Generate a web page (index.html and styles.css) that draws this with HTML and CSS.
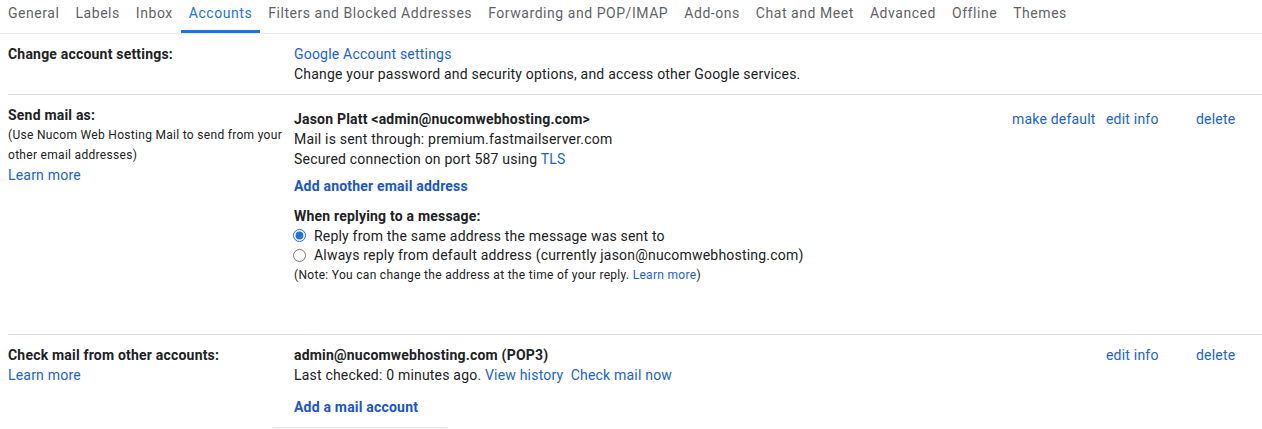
FILE: index.html
```html
<!DOCTYPE html>
<html>
<head>
<meta charset="utf-8">
<link rel="stylesheet" href="styles.css">
</head>
<body>
<div class="page">
  <nav class="tabs">
    <span class="tab">General</span>
    <span class="tab">Labels</span>
    <span class="tab">Inbox</span>
    <span class="tab active">Accounts</span>
    <span class="tab">Filters and Blocked Addresses</span>
    <span class="tab">Forwarding and POP/IMAP</span>
    <span class="tab">Add-ons</span>
    <span class="tab">Chat and Meet</span>
    <span class="tab">Advanced</span>
    <span class="tab">Offline</span>
    <span class="tab">Themes</span>
  </nav>

  <section class="row">
    <div class="label"><b>Change account settings:</b></div>
    <div class="content">
      <a class="link block">Google Account settings</a>
      <div>Change your password and security options, and access other Google services.</div>
    </div>
    <div class="act"></div><div class="act"></div><div class="act"></div>
  </section>

  <section class="row sendas">
    <div class="label">
      <b>Send mail as:</b>
      <div class="small">(Use Nucom Web Hosting Mail to send from your other email addresses)</div>
      <a class="link block">Learn more</a>
    </div>
    <div class="content shifted">
      <b>Jason Platt &lt;admin@nucomwebhosting.com&gt;</b>
      <div>Mail is sent through: premium.fastmailserver.com</div>
      <div>Secured connection on port 587 using <a class="link">TLS</a></div>
      <a class="blink add-email">Add another email address</a>
      <div class="reply-head"><b>When replying to a message:</b></div>
      <label class="radio-line"><input type="radio" name="r" checked> Reply from the same address the message was sent to</label>
      <label class="radio-line"><input type="radio" name="r"> Always reply from default address (currently jason@nucomwebhosting.com)</label>
      <div class="note">(Note: You can change the address at the time of your reply. <a class="link">Learn more</a>)</div>
    </div>
    <div class="act shifted"><a class="link">make default</a></div>
    <div class="act shifted"><a class="link">edit info</a></div>
    <div class="act shifted"><a class="link">delete</a></div>
  </section>

  <section class="row last">
    <div class="label">
      <b>Check mail from other accounts:</b>
      <a class="link block">Learn more</a>
    </div>
    <div class="content">
      <b>admin@nucomwebhosting.com (POP3)</b>
      <div>Last checked: 0 minutes ago. <a class="link">View history</a>&nbsp; <a class="link">Check mail now</a></div>
      <a class="blink add-account">Add a mail account</a>
      <div class="stub"></div>
    </div>
    <div class="act"></div>
    <div class="act"><a class="link">edit info</a></div>
    <div class="act"><a class="link">delete</a></div>
  </section>
</div>
</body>
</html>
```

FILE: styles.css
```css
html, body {
  margin: 0;
  padding: 0;
  background: #fff;
}
body {
  font-family: Roboto, "Liberation Sans", Arial, sans-serif;
  font-size: 14px;
  line-height: 20px;
  letter-spacing: 0.2px;
  color: #202124;
  overflow: hidden;
}
.page {
  margin-left: 8px;
}
.tabs {
  display: flex;
  height: 33px;
  border-bottom: 1px solid #e8eaed;
  margin-left: -8px;
}
.tab {
  display: block;
  padding: 3px 8px 0;
  box-sizing: border-box;
  height: 33px;
  color: #5f6368;
  font-size: 14px;
  letter-spacing: 0.55px;
  white-space: nowrap;
  border-bottom: 3px solid transparent;
}
.tab.active {
  color: #1a73e8;
  border-bottom-color: #1a73e8;
}
.row {
  display: grid;
  grid-template-columns: 286px 1fr 94px 90px 70px;
  border-bottom: 1px solid #e0e0e0;
  padding: 10px 0 10px;
}
.row.sendas {
  padding: 10px 0 49px;
}
.row.last {
  border-bottom: none;
  padding: 10px 0 0;
}
.label b, .content b {
  font-weight: 700;
  display: block;
}
.block {
  display: block;
}
.small {
  font-size: 12px;
  line-height: 20px;
  letter-spacing: 0.3px;
}
.shifted {
  padding-top: 4px;
}
.act {
  padding-left: 4px;
  white-space: nowrap;
}
.link {
  color: #1a62d6;
  text-decoration: none;
}
.blink {
  display: block;
  color: #1a55cc;
  font-weight: 700;
  text-decoration: none;
}
.add-email {
  margin-top: 7px;
}
.reply-head {
  margin-top: 10px;
}
.radio-line {
  display: flex;
  align-items: center;
  height: 19.5px;
}
.radio-line input {
  margin: 0 8px 0 -1px;
  width: 13px;
  height: 13px;
  accent-color: #1a73e8;
}
.note {
  font-size: 12px;
  line-height: 20px;
  letter-spacing: 0.3px;
  color: #202124;
}
.add-account {
  margin-top: 12px;
}
.stub {
  margin-top: 10px;
  margin-left: -21px;
  width: 174px;
  height: 1px;
  background: #e0e0e0;
}
```
